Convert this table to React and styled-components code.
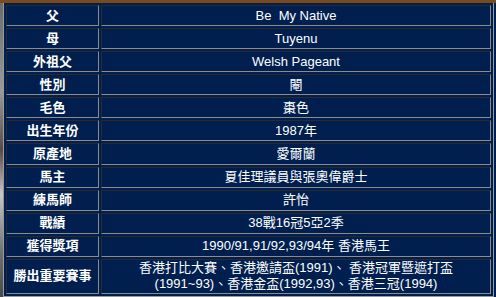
import styled, { createGlobalStyle } from 'styled-components';

const GlobalStyle = createGlobalStyle`
  html, body {
    margin: 0;
    padding: 0;
    background: #001f4f;
  }
`;

const rows = [
  ['父', 'Be  My Native'],
  ['母', 'Tuyenu'],
  ['外祖父', 'Welsh Pageant'],
  ['性別', '閹'],
  ['毛色', '棗色'],
  ['出生年份', '1987年'],
  ['原產地', '愛爾蘭'],
  ['馬主', '夏佳理議員與張奧偉爵士'],
  ['練馬師', '許怡'],
  ['戰績', '38戰16冠5亞2季'],
  ['獲得獎項', '1990/91,91/92,93/94年 香港馬王'],
];

const Page = styled.div`
  width: 496px;
  height: 297px;
  overflow: hidden;
  border-top: 3px solid #7a4a1c;
  box-sizing: border-box;
  display: flex;
  background: #001f4f;
`;

const Strip = styled.div`
  width: 3px;
  flex: none;
  background: linear-gradient(180deg, #6b6b6b 0%, #9a9a9a 30%, #5a4a48 50%, #c8c8c8 65%, #707070 85%, #4a4a4a 100%);
`;

const Table = styled.table`
  width: 491px;
  flex: none;
  border-collapse: separate;
  border-spacing: 2px;
  border-right: 1px solid #9a9a9a;
  border-left: 1px solid #9a9a9a;
  border-bottom: 1px solid #9a9a9a;
  margin-top: 0;
  font-family: 'Liberation Sans', 'Noto Sans CJK TC', sans-serif;
  font-size: 13px;
  color: #ffffff;
  table-layout: fixed;
`;

const Cell = styled.td`
  height: 19px;
  padding: 0 2px;
  text-align: center;
  vertical-align: middle;
  line-height: 16px;
  border-top: 1px solid #2a2a2a;
  border-left: 1px solid #2a2a2a;
  border-bottom: 1px solid #8c8c8c;
  border-right: 1px solid #8c8c8c;
  font-weight: ${(p) => (p.head ? 'bold' : 'normal')};
  width: ${(p) => (p.head ? '87px' : 'auto')};
  white-space: pre;
`;

const TallCell = styled(Cell)`
  height: 33px;
  white-space: normal;
`;

export default function App() {
  return (
    <>
      <GlobalStyle />
      <Page>
        <Strip />
        <Table>
          <tbody>
            {rows.map(([k, v]) => (
              <tr key={k}>
                <Cell head>{k}</Cell>
                <Cell>{v}</Cell>
              </tr>
            ))}
            <tr>
              <TallCell head>勝出重要賽事</TallCell>
              <TallCell>
                香港打比大賽、香港邀請盃(1991)、 香港冠軍暨遮打盃
                <br />
                (1991~93)、香港金盃(1992,93)、香港三冠(1994)
              </TallCell>
            </tr>
          </tbody>
        </Table>
      </Page>
    </>
  );
}
